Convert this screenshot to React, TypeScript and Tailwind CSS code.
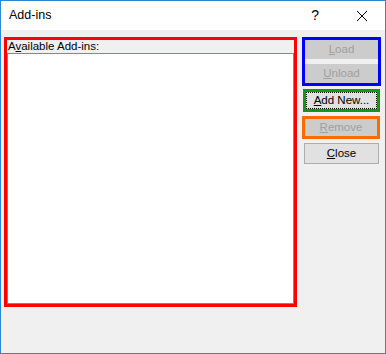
import React from "react";

const font = { fontFamily: '"Liberation Sans", Arial, sans-serif' };

export default function App() {
  return (
    <div
      className="w-[386px] h-[354px] border border-[#2b88d8] flex flex-col bg-[#f0f0f0] text-black"
      style={font}
    >
      {/* Title bar */}
      <div className="h-[29px] bg-white flex items-center shrink-0">
        <span className="ml-[8px] text-[12.5px] leading-none">Add-ins</span>
        <span className="ml-auto text-[14px] leading-none mr-[37px] mt-[-1px]">?</span>
        <svg width="12" height="12" viewBox="0 0 12 12" className="mr-[17px]">
          <path d="M1 1 L11 11 M11 1 L1 11" stroke="#000" strokeWidth="1" fill="none" />
        </svg>
      </div>

      {/* Body */}
      <div className="flex-1 flex pl-[3px] pt-[7px]">
        {/* Red annotated list region */}
        <div className="w-[293px] h-[270px] border-[3px] border-[#ff0000] flex flex-col">
          <div className="h-[13px] pl-[1px] text-[11.5px] leading-[12px]">
            A<span className="underline">v</span>ailable Add-ins:
          </div>
          <div className="flex-1 bg-white border border-[#828790]" />
        </div>

        {/* Right buttons column */}
        <div className="ml-[5px] w-[79px] flex flex-col text-[11.5px]">
          <div className="h-[49px] border-[3px] border-[#0000ff] flex flex-col">
            <div className="h-[19px] bg-[#cccccc] text-[#a0a0a0] flex items-center justify-center">
              <span>
                <span className="underline">L</span>oad
              </span>
            </div>
            <div className="h-[5px] bg-[#f0f0f0]" />
            <div className="h-[19px] bg-[#cccccc] text-[#a0a0a0] flex items-center justify-center">
              <span>
                <span className="underline">U</span>nload
              </span>
            </div>
          </div>

          <div className="mt-[3px] ml-[1px] w-[77px] h-[23px] border-[3px] border-[#119a11] flex">
            <div className="flex-1 border border-dotted border-black bg-[#e1e1e1] flex items-center justify-center">
              <span>
                <span className="underline">A</span>dd New...
              </span>
            </div>
          </div>

          <div className="mt-[4px] w-[78px] h-[23px] border-[3px] border-[#ff6a00] flex">
            <div className="flex-1 bg-[#cccccc] text-[#a0a0a0] flex items-center justify-center">
              <span>
                <span className="underline">R</span>emove
              </span>
            </div>
          </div>

          <div className="mt-[4px] ml-[2px] w-[75px] h-[21px] border border-[#adadad] bg-[#e1e1e1] flex items-center justify-center">
            <span>
              <span className="underline">C</span>lose
            </span>
          </div>
        </div>
      </div>
    </div>
  );
}
